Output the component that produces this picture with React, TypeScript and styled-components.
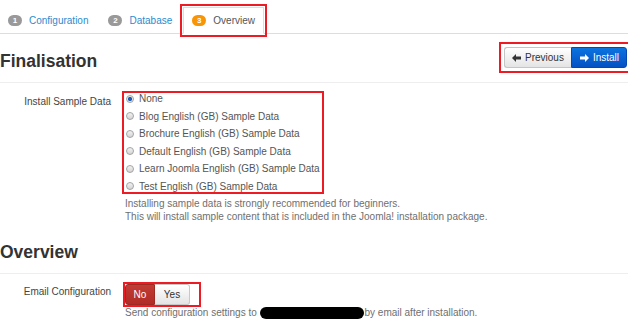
import React from 'react';
import styled, { createGlobalStyle } from 'styled-components';

const GlobalStyle = createGlobalStyle`
  html, body {
    margin: 0;
    padding: 0;
    background: #ffffff;
  }
  body {
    font-family: 'Liberation Sans', Arial, sans-serif;
    font-size: 10px;
    color: #333;
    overflow: hidden;
  }
`;

const Page = styled.div`
  width: 628px;
  height: 324px;
  overflow: hidden;
`;

const TabBar = styled.ul`
  display: flex;
  align-items: flex-end;
  height: 34px;
  box-sizing: border-box;
  margin: 0;
  padding: 0;
  list-style: none;
  border-bottom: 1px solid #ddd;
`;

const Tab = styled.li<{ $active?: boolean }>`
  display: flex;
  align-items: center;
  height: 27px;
  box-sizing: border-box;
  margin: 0 2px -1px 0;
  padding: 0 8px;
  border: 1px solid transparent;
  color: #2a8bd0;
  line-height: 12px;

  &:first-child {
    margin-left: -1px;
  }

  ${p => p.$active && `
    background: #fff;
    color: #555;
    border-color: #ddd #ddd #fff;
    outline: 2px solid #ed1c24;
    outline-offset: 1px;
  `}
`;

const Badge = styled.span<{ $active?: boolean }>`
  display: inline-flex;
  align-items: center;
  justify-content: center;
  width: 14px;
  height: 11px;
  margin-right: 7px;
  border-radius: 6px;
  background: ${p => (p.$active ? '#f89406' : '#999')};
  color: #fff;
  font-size: 8px;
  font-weight: bold;
`;

const SectionHeader = styled.div`
  display: flex;
  justify-content: space-between;
  align-items: flex-start;
  padding: 13px 1px 11px 0;
  border-bottom: 1px solid #eee;
`;

const Heading = styled.h3`
  margin: 4px 0 0;
  font-size: 17.5px;
  line-height: 20px;
  font-weight: bold;
  color: #333;
`;

const ButtonGroup = styled.div`
  display: flex;
  outline: 2px solid #ed1c24;
  outline-offset: 3px;
`;

const NavButton = styled.button<{ $primary?: boolean }>`
  display: inline-flex;
  align-items: center;
  gap: 4px;
  height: 21px;
  box-sizing: border-box;
  margin: 0;
  padding: 0 7px;
  font-family: inherit;
  font-size: 10px;
  cursor: pointer;
  ${p => (p.$primary ? `
    color: #fff;
    background: linear-gradient(#0b74de, #0551c4);
    border: 1px solid #0548b0;
    border-radius: 0 3px 3px 0;
    padding: 0 7px 0 8px;
  ` : `
    color: #333;
    background: linear-gradient(#ffffff, #e4e4e4);
    border: 1px solid #c5c5c5;
    border-right: none;
    border-radius: 3px 0 0 3px;
  `)}
`;

const FormRow = styled.div<{ $top: number }>`
  display: grid;
  grid-template-columns: 111px 1fr;
  column-gap: 10px;
  margin-top: ${p => p.$top}px;
`;

const Label = styled.div<{ $pad: number }>`
  text-align: right;
  padding-top: ${p => p.$pad}px;
  line-height: 12.5px;
  color: #444;
`;

const RadioGroup = styled.div`
  width: fit-content;
  padding: 0 5px;
  outline: 2px solid #ed1c24;
  outline-offset: -3px;
`;

const RadioRow = styled.label`
  display: flex;
  align-items: center;
  height: 17.5px;
  color: #555;
`;

const Radio = styled.span<{ $checked?: boolean }>`
  width: 8px;
  height: 8px;
  margin-right: 5px;
  box-sizing: border-box;
  border-radius: 50%;
  border: 1px solid #a3a3a3;
  background: ${p =>
    p.$checked
      ? 'radial-gradient(circle, #1f5bb6 0 1.8px, #e8e8e8 2.4px)'
      : 'linear-gradient(#f2f2f2, #d4d4d4)'};
`;

const HelpText = styled.p`
  margin: 3px 0 2px;
  padding-left: 4px;
  line-height: 12.5px;
  color: #6f6f6f;
`;

const ToggleFrame = styled.div`
  display: inline-flex;
  margin: 10px 0 0 4px;
  padding-right: 9px;
  outline: 2px solid #ed1c24;
`;

const ToggleButton = styled.button<{ $on?: boolean; $w: number }>`
  width: ${p => p.$w}px;
  height: 21px;
  margin: 0;
  padding: 0;
  box-sizing: border-box;
  font-family: inherit;
  font-size: 10px;
  ${p => (p.$on ? `
    color: #fff;
    background: linear-gradient(#c23c34, #b02c26);
    border: 1px solid #9e2a24;
    border-radius: 3px 0 0 3px;
  ` : `
    color: #333;
    background: linear-gradient(#ffffff, #e4e4e4);
    border: 1px solid #c8c8c8;
    border-left: none;
    border-radius: 0 3px 3px 0;
  `)}
`;

const SendNote = styled.p`
  margin: 2px 0 0;
  padding-left: 4px;
  line-height: 12.5px;
  color: #6f6f6f;
  white-space: nowrap;
`;

const Redacted = styled.span`
  display: inline-block;
  width: 104px;
  height: 12px;
  margin: 0 1px 0 0;
  border-radius: 6px;
  background: #000;
  vertical-align: -3px;
`;

const Arrow = ({ dir }: { dir: 'left' | 'right' }) => (
  <svg width="9" height="8" viewBox="0 0 9 8" style={dir === 'right' ? { transform: 'scaleX(-1)' } : undefined}>
    <path d="M0 4 L4 0 L4 2.6 L9 2.6 L9 5.4 L4 5.4 L4 8 Z" fill="currentColor" />
  </svg>
);

const sampleOptions = [
  'None',
  'Blog English (GB) Sample Data',
  'Brochure English (GB) Sample Data',
  'Default English (GB) Sample Data',
  'Learn Joomla English (GB) Sample Data',
  'Test English (GB) Sample Data',
];

const App: React.FC = () => (
  <Page>
    <GlobalStyle />
    <TabBar>
      <Tab><Badge>1</Badge>Configuration</Tab>
      <Tab><Badge>2</Badge>Database</Tab>
      <Tab $active><Badge $active>3</Badge>Overview</Tab>
    </TabBar>

    <SectionHeader>
      <Heading>Finalisation</Heading>
      <ButtonGroup>
        <NavButton><Arrow dir="left" />Previous</NavButton>
        <NavButton $primary><Arrow dir="right" />Install</NavButton>
      </ButtonGroup>
    </SectionHeader>

    <FormRow $top={7}>
      <Label $pad={5.5}>Install Sample Data</Label>
      <div>
        <RadioGroup>
          {sampleOptions.map((opt, i) => (
            <RadioRow key={opt}>
              <Radio $checked={i === 0} />
              {opt}
            </RadioRow>
          ))}
        </RadioGroup>
        <HelpText>
          Installing sample data is strongly recommended for beginners.
          <br />
          This will install sample content that is included in the Joomla! installation package.
        </HelpText>
      </div>
    </FormRow>

    <SectionHeader>
      <Heading>Overview</Heading>
    </SectionHeader>

    <FormRow $top={0}>
      <Label $pad={11.5}>Email Configuration</Label>
      <div>
        <ToggleFrame>
          <ToggleButton $on $w={30}>No</ToggleButton>
          <ToggleButton $w={35}>Yes</ToggleButton>
        </ToggleFrame>
        <SendNote>
          Send configuration settings to <Redacted />by email after installation.
        </SendNote>
      </div>
    </FormRow>
  </Page>
);

export default App;
